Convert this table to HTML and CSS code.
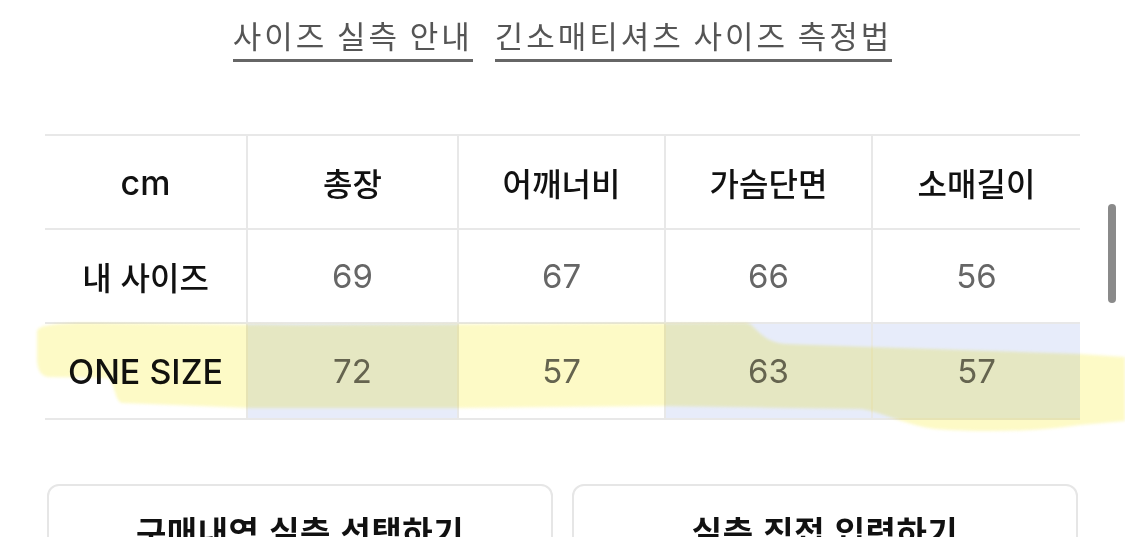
FILE: index.html
```html
<!DOCTYPE html>
<html lang="ko">
<head>
<meta charset="utf-8">
<title>사이즈</title>
<link rel="stylesheet" href="styles.css">
</head>
<body>
<div class="page">
  <nav class="links">
    <a class="link" href="#">사이즈 실측 안내</a>
    <a class="link" href="#">긴소매티셔츠 사이즈 측정법</a>
  </nav>

  <table class="size">
    <colgroup>
      <col class="c1"><col class="c2"><col class="c3"><col class="c4"><col class="c5">
    </colgroup>
    <thead>
      <tr>
        <th class="en">cm</th>
        <th>총장</th>
        <th>어깨너비</th>
        <th>가슴단면</th>
        <th>소매길이</th>
      </tr>
    </thead>
    <tbody>
      <tr>
        <th>내 사이즈</th>
        <td>69</td><td>67</td><td>66</td><td>56</td>
      </tr>
      <tr class="mine">
        <th class="en">ONE SIZE</th>
        <td class="sel">72</td><td>57</td><td class="sel">63</td><td class="sel">57</td>
      </tr>
    </tbody>
  </table>

  <div class="actions">
    <button class="btn" type="button">구매내역 실측 선택하기</button>
    <button class="btn" type="button">실측 직접 입력하기</button>
  </div>

  <svg class="marker" width="1125" height="537" viewBox="0 0 1125 537" aria-hidden="true">
    <path d="M37,332 C37,325 55,323 90,323 L300,325 L745,323 C756,323 758,341 785,344 L870,347 L1080,354 L1125,357 L1125,421 L1080,425 C1040,431 985,433 935,429 C905,425 885,413 862,409 L665,406 L460,408 L250,408 L122,403 C115,402 114,380 108,378 L48,377 C40,376 37,368 37,358 Z"/>
  </svg>

  <div class="scrollbar"></div>
</div>
</body>
</html>
```

FILE: styles.css
```css
* { box-sizing: border-box; }

html, body {
  margin: 0;
  padding: 0;
  background: #ffffff;
}

body {
  font-family: "Inter", "Noto Sans CJK KR", sans-serif;
  color: #111111;
  overflow: hidden;
}

.page {
  position: relative;
  width: 1125px;
  height: 537px;
  padding: 17px 45px 0 45px;
}

.links {
  display: flex;
  justify-content: center;
  gap: 22px;
}

.link {
  display: inline-block;
  font-family: "Noto Sans CJK KR", sans-serif;
  font-size: 31px;
  line-height: 36px;
  letter-spacing: 3px;
  word-spacing: -2px;
  color: #555555;
  text-decoration: none;
  border-bottom: 3px solid #666666;
  padding-bottom: 6px;
}

.size {
  margin-top: 72px;
  width: 1035px;
  border-collapse: collapse;
  table-layout: fixed;
}

.size col.c1 { width: 202px; }
.size col.c2 { width: 211px; }
.size col.c3 { width: 207px; }
.size col.c4 { width: 207px; }
.size col.c5 { width: 208px; }

.size th,
.size td {
  height: 94px;
  padding: 0;
  text-align: center;
  vertical-align: middle;
  border-top: 2px solid #e8e8e8;
  border-bottom: 2px solid #e8e8e8;
  border-left: 2px solid #e8e8e8;
}

.size tr.mine > * {
  height: 96px;
}

.size tr > :first-child {
  border-left: none;
}

.size th {
  font-family: "Noto Sans CJK KR", sans-serif;
  font-size: 32px;
  font-weight: 500;
  color: #111111;
}

.size th.en {
  font-family: "Inter", sans-serif;
  font-size: 34px;
  font-weight: 500;
}

.size td {
  font-family: "Inter", sans-serif;
  font-size: 33px;
  font-weight: 400;
  color: #666666;
}

.size td.sel {
  background: #e7ecfa;
}

.actions {
  display: flex;
  gap: 19px;
  margin-top: 64px;
  padding-left: 2px;
}

.btn {
  width: 506px;
  height: 90px;
  background: #ffffff;
  border: 2px solid #e6e6e6;
  border-radius: 12px;
  font-family: "Noto Sans CJK KR", sans-serif;
  font-size: 33px;
  font-weight: 700;
  letter-spacing: 0.5px;
  color: #111111;
  padding: 21px 0 0 0;
  display: flex;
  justify-content: center;
  align-items: flex-start;
}

.marker {
  position: absolute;
  left: 0;
  top: 0;
  pointer-events: none;
  mix-blend-mode: multiply;
}

.marker path {
  fill: #fdfac6;
  filter: blur(1.5px);
}

.scrollbar {
  position: absolute;
  left: 1108px;
  top: 204px;
  width: 8px;
  height: 99px;
  border-radius: 4px;
  background: #8a8a8a;
}
```
